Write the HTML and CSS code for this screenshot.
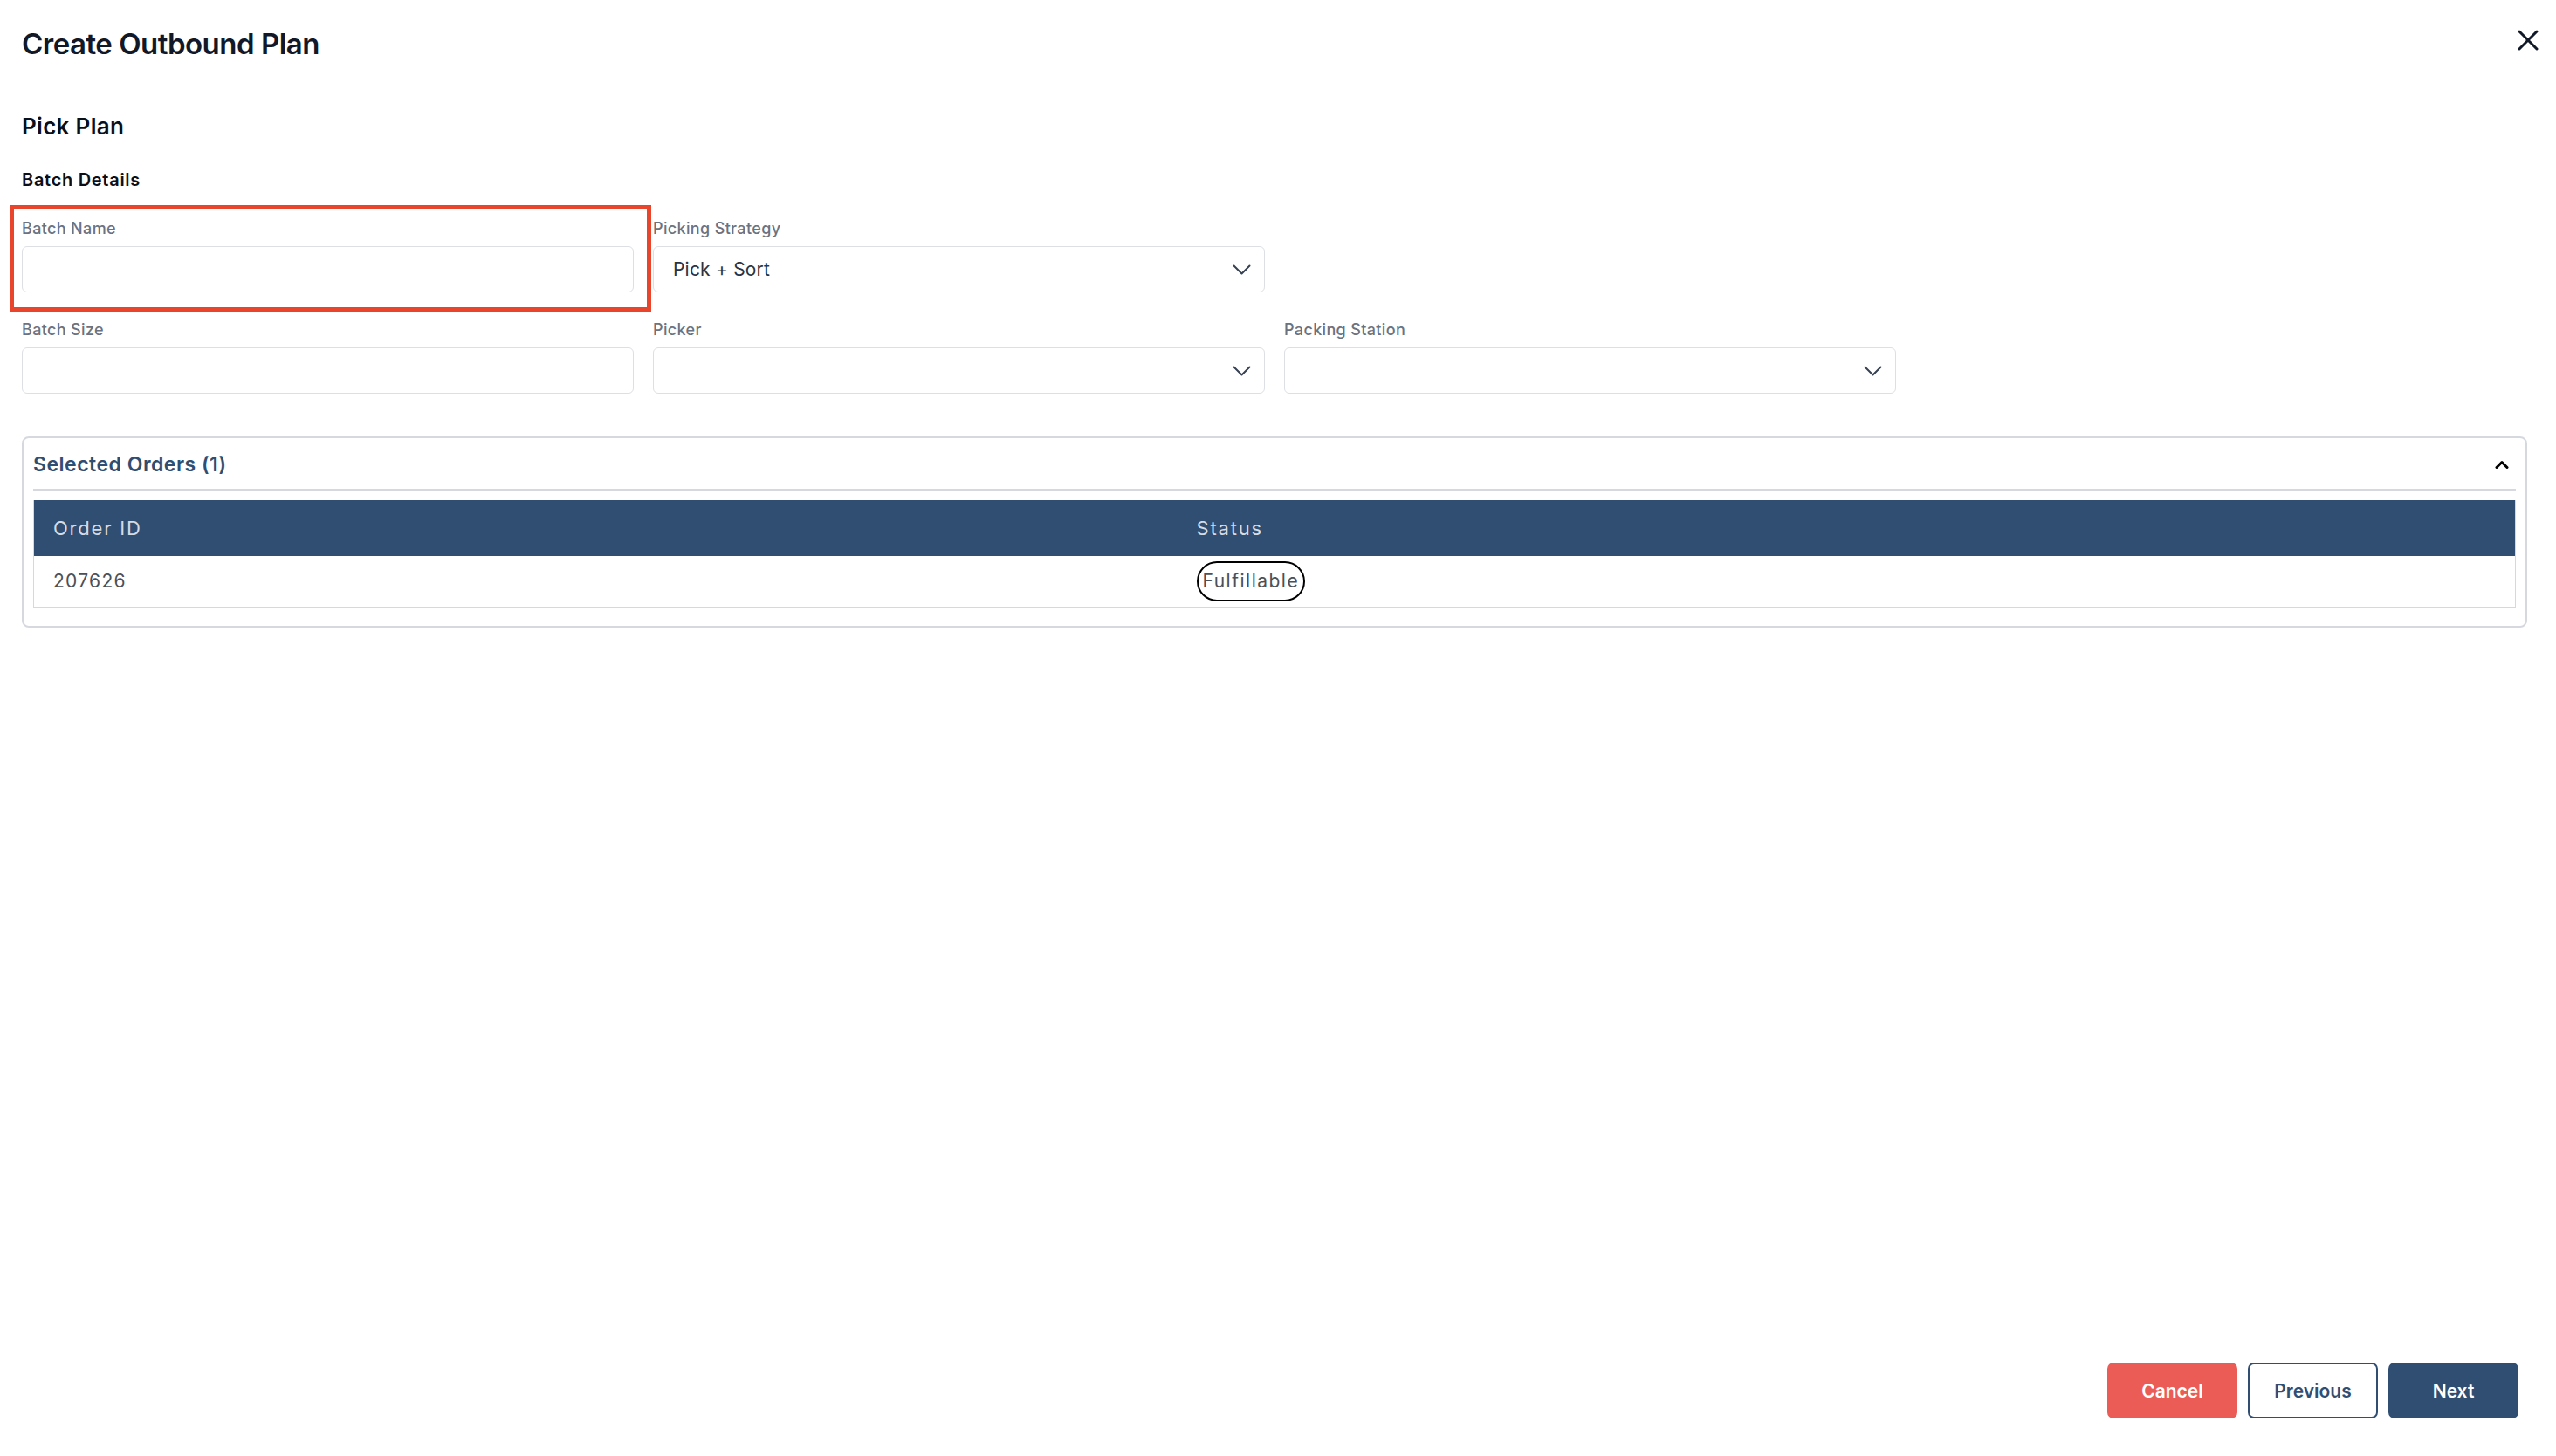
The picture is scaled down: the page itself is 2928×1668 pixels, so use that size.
FILE: index.html
```html
<!DOCTYPE html>
<html lang="en">
<head>
    <meta charset="UTF-8">
    <meta name="viewport" content="width=device-width, initial-scale=1.0">
    <title>Create Outbound Plan</title>
    <link rel="stylesheet" href="styles.css">
</head>
<body>
    <div class="modal">
        <header class="modal-header">
            <h1>Create Outbound Plan</h1>
            <button class="close-btn" aria-label="Close">
                <svg width="24" height="24" viewBox="0 0 24 24" fill="none" stroke="#111827" stroke-width="3" stroke-linecap="round">
                    <line x1="2" y1="2" x2="22" y2="22"/>
                    <line x1="22" y1="2" x2="2" y2="22"/>
                </svg>
            </button>
        </header>

        <main class="modal-body">
            <h2 class="section-title">Pick Plan</h2>
            <h3 class="group-title">Batch Details</h3>

            <div class="form-grid">
                <div class="field">
                    <label>Batch Name</label>
                    <input type="text" class="text-input">
                    <span class="highlight-box"></span>
                </div>
                <div class="field">
                    <label>Picking Strategy</label>
                    <div class="select-box">
                        <span>Pick + Sort</span>
                        <svg width="21" height="12" viewBox="0 0 21 12" fill="none" stroke="#374151" stroke-width="2" stroke-linecap="round" stroke-linejoin="round">
                            <polyline points="1.5,1.5 10.5,10.5 19.5,1.5"/>
                        </svg>
                    </div>
                </div>
                <div class="field field-break">
                    <label>Batch Size</label>
                    <input type="text" class="text-input">
                </div>
                <div class="field">
                    <label>Picker</label>
                    <div class="select-box">
                        <span></span>
                        <svg width="21" height="12" viewBox="0 0 21 12" fill="none" stroke="#374151" stroke-width="2" stroke-linecap="round" stroke-linejoin="round">
                            <polyline points="1.5,1.5 10.5,10.5 19.5,1.5"/>
                        </svg>
                    </div>
                </div>
                <div class="field">
                    <label>Packing Station</label>
                    <div class="select-box">
                        <span></span>
                        <svg width="21" height="12" viewBox="0 0 21 12" fill="none" stroke="#374151" stroke-width="2" stroke-linecap="round" stroke-linejoin="round">
                            <polyline points="1.5,1.5 10.5,10.5 19.5,1.5"/>
                        </svg>
                    </div>
                </div>
            </div>

            <section class="orders-card">
                <div class="orders-header">
                    <span class="orders-title">Selected Orders (1)</span>
                    <svg width="16" height="10" viewBox="0 0 16 10" fill="none" stroke="#000" stroke-width="3" stroke-linecap="round" stroke-linejoin="round">
                        <polyline points="2,8.5 8,2.5 14,8.5"/>
                    </svg>
                </div>
                <table class="orders-table">
                    <thead>
                        <tr>
                            <th class="col-id">Order ID</th>
                            <th>Status</th>
                        </tr>
                    </thead>
                    <tbody>
                        <tr>
                            <td>207626</td>
                            <td><span class="status-badge">Fulfillable</span></td>
                        </tr>
                    </tbody>
                </table>
            </section>
        </main>

        <footer class="modal-footer">
            <button class="btn btn-cancel">Cancel</button>
            <button class="btn btn-outline">Previous</button>
            <button class="btn btn-primary">Next</button>
        </footer>
    </div>
</body>
</html>
```

FILE: styles.css
```css
* {
    box-sizing: border-box;
}

body {
    margin: 0;
    font-family: Inter, 'Liberation Sans', sans-serif;
    background: white;
    color: #111827;
}

.modal {
    min-height: 100vh;
    display: flex;
    flex-direction: column;
    padding: 0 33px 0 25px;
}

.modal-header {
    display: flex;
    justify-content: space-between;
    align-items: flex-start;
    padding-top: 30px;
}

.modal-header h1 {
    margin: 0;
    font-size: 33px;
    line-height: 40px;
    font-weight: 600;
    letter-spacing: -0.5px;
    color: #111827;
}

.close-btn {
    margin: 4px -13px 0 0;
    padding: 0;
    border: none;
    background: none;
    width: 24px;
    height: 24px;
    display: flex;
    cursor: pointer;
}

.section-title {
    margin: 59px 0 0;
    font-size: 26px;
    line-height: 32px;
    font-weight: 600;
    letter-spacing: 0.3px;
    color: #0b0f19;
}

.group-title {
    margin: 33px 0 0;
    font-size: 20px;
    line-height: 24px;
    font-weight: 600;
    letter-spacing: 0.7px;
    color: #0b0f19;
}

.form-grid {
    display: grid;
    grid-template-columns: repeat(4, 701px);
    column-gap: 22px;
    row-gap: 32px;
    margin-top: 33px;
}

.field {
    position: relative;
    display: flex;
    flex-direction: column;
}

.field-break {
    grid-column: 1;
}

.field label {
    font-size: 18px;
    line-height: 22px;
    font-weight: 500;
    letter-spacing: 0.35px;
    color: #6b7280;
    margin-bottom: 9px;
}

.text-input,
.select-box {
    height: 53px;
    border: 1.5px solid #dcdfe4;
    border-radius: 6px;
    background: white;
    font-family: inherit;
    font-size: 21px;
}

.select-box {
    display: flex;
    align-items: center;
    justify-content: space-between;
    padding: 0 15px 0 22px;
    color: #2b3341;
    letter-spacing: 0.2px;
}

.highlight-box {
    position: absolute;
    top: -16px;
    left: -14px;
    right: -20px;
    bottom: -22px;
    border: 5px solid #e8452c;
    pointer-events: none;
}

.orders-card {
    margin-top: 49px;
    border: 2px solid #d5d9df;
    border-radius: 8px;
    padding: 16px 11px 21px;
}

.orders-header {
    display: flex;
    justify-content: space-between;
    align-items: center;
    padding: 0 8px 14px 0;
    border-bottom: 2px solid #d5d9df;
}

.orders-title {
    font-size: 23px;
    line-height: 28px;
    font-weight: 600;
    letter-spacing: 0.5px;
    color: #2f4e72;
}

.orders-table {
    width: 100%;
    margin-top: 11px;
    border-collapse: collapse;
    table-layout: fixed;
    border: 1.5px solid #d5d9df;
    border-top: none;
}

.orders-table .col-id {
    width: 1310px;
}

.orders-table th {
    height: 64px;
    padding: 0 22px;
    background: #304e72;
    color: #d4dce6;
    font-size: 22px;
    font-weight: 400;
    letter-spacing: 1.8px;
    text-align: left;
}

.orders-table td {
    height: 58px;
    padding: 0 22px;
    font-size: 21px;
    letter-spacing: 1.3px;
    color: #4b5058;
    border-bottom: 1.5px solid #d5d9df;
}

.status-badge {
    display: inline-block;
    padding: 8px 5px;
    line-height: 26px;
    border: 2px solid #000;
    border-radius: 24px;
    font-size: 21px;
    letter-spacing: 1.5px;
    color: #4b5058;
}

.modal-footer {
    margin-top: auto;
    display: flex;
    justify-content: flex-end;
    gap: 12px;
    padding: 0 10px 43px 0;
}

.btn {
    width: 149px;
    height: 64px;
    border-radius: 7px;
    font-family: inherit;
    font-size: 21px;
    font-weight: 600;
    cursor: pointer;
}

.btn-cancel {
    background: #eb5c57;
    color: white;
    border: none;
}

.btn-outline {
    background: white;
    color: #2f4e72;
    border: 2px solid #2f4e72;
}

.btn-primary {
    background: #2f4e72;
    color: white;
    border: none;
}
```
